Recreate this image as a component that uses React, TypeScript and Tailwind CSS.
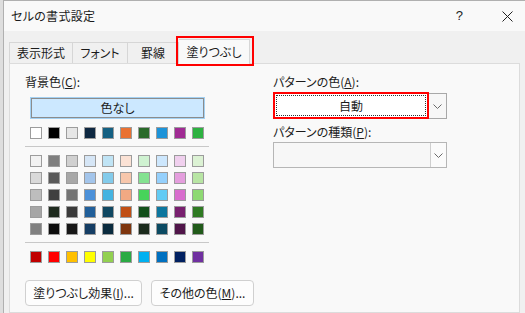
import React from "react";

const row0 = ["#ffffff", "#000000", "#e6e6e6", "#0e2841", "#156082", "#e97132", "#2a6a2a", "#1d93d8", "#a02b93", "#2db140"];
const grid = [
  ["#f2f2f2", "#7f7f7f", "#d0d0d0", "#d6e6f6", "#c0e4f5", "#fbe2d5", "#cff2d1", "#cde7fd", "#f0d0ee", "#dcf2d4"],
  ["#d9d9d9", "#595959", "#a8a8a8", "#a3c5eb", "#83cbeb", "#f7c7ac", "#84e291", "#95d0fc", "#e49edd", "#b8e5a4"],
  ["#bdbdbd", "#404040", "#747474", "#4a90d9", "#44b3e1", "#f1a983", "#47d45a", "#61cbf4", "#d86dcd", "#8ed973"],
  ["#a6a6a6", "#1f2b1f", "#3a3a3a", "#215f9a", "#104862", "#c04f15", "#124f1a", "#0c769e", "#78206e", "#2f7a23"],
  ["#808080", "#0d0d0d", "#171717", "#153d64", "#0a2b3e", "#7e350e", "#1a2a1c", "#0b4a62", "#501549", "#215a1a"],
];
const std = ["#c00000", "#ff0000", "#ffc000", "#ffff00", "#92d050", "#2baa44", "#00b0f0", "#0070c0", "#002060", "#7030a0"];

function Swatch({ c }: { c: string }) {
  return <div className="w-[12px] h-[12px] border border-[#9c9c9c]" style={{ backgroundColor: c }} />;
}

function Row({ colors }: { colors: string[] }) {
  return (
    <div className="flex gap-[6px]">
      {colors.map((c, i) => (
        <Swatch key={i} c={c} />
      ))}
    </div>
  );
}

function Chevron() {
  return (
    <svg width="9" height="5" viewBox="0 0 9 5">
      <path d="M0.5 0.5 L4.5 4.5 L8.5 0.5" fill="none" stroke="#6a6a6a" strokeWidth="1" />
    </svg>
  );
}

export default function App() {
  return (
    <div className="w-[525px] h-[313px] overflow-hidden bg-[#f0f0f0] flex font-['Noto_Sans_CJK_JP','Noto_Sans',sans-serif] [font-feature-settings:'palt'] text-[12px] leading-[16px] text-[#1b1b1b]">
      <div className="w-[3px] bg-[#dedede]" />
      <div className="flex-1 flex flex-col border-l border-t border-[#b0b0b0] min-w-0">
        {/* Title bar */}
        <div className="h-[30px] bg-[#f9f9f9] flex items-center pl-[7px] pr-[12px]">
          <span className="text-[12px] tracking-[0.3px]">セルの書式設定</span>
          <div className="ml-auto flex items-center gap-[39px]">
            <span className="text-[13px] font-['Liberation_Sans',sans-serif] text-[#222]">?</span>
            <svg width="11" height="11" viewBox="0 0 11 11">
              <path d="M0.5 0.5 L10.5 10.5 M10.5 0.5 L0.5 10.5" stroke="#222" strokeWidth="1" />
            </svg>
          </div>
        </div>
        {/* Tab strip */}
        <div className="h-[32px] flex items-end pl-[5px]">
          <div className="w-[64px] h-[21px] border border-b-0 border-[#d6d6d6] flex items-center justify-center">表示形式</div>
          <div className="w-[55px] h-[21px] border border-b-0 border-l-0 border-[#d6d6d6] flex items-center justify-center">フォント</div>
          <div className="w-[51px] h-[21px] border border-b-0 border-l-0 border-[#d6d6d6] flex items-center justify-center">罫線</div>
          <div className="relative w-[71px] h-[25px] mb-[-1px] border border-b-0 border-l-0 border-[#d6d6d6] bg-[#f9f9f9] flex items-center justify-center z-10">
            塗りつぶし
            <span className="absolute left-[-3px] right-[-5px] top-[-4px] bottom-[-2px] border-2 border-[#ff0000]" />
          </div>
        </div>
        {/* Panel */}
        <div className="flex-1 mx-[5px] border border-[#dcdcdc] bg-[#f9f9f9] flex flex-col">
          <div className="flex pt-[10px]">
            <div className="ml-[15px] w-[184px] flex flex-col">
              <div>
                背景色(<span className="underline">C</span>):
              </div>
              <div className="ml-[5px] mt-[7px] w-[175px] h-[22px] border border-[#a3d1f3] bg-[#cce8ff]">
                <div className="h-full border border-[#8c8c8c] flex items-center justify-center">色なし</div>
              </div>
              <div className="ml-[5px] mt-[8px]">
                <Row colors={row0} />
              </div>
              <div className="mt-[7px] h-px bg-[#c8c8c8]" />
              <div className="ml-[5px] mt-[8px] flex flex-col gap-[5px]">
                {grid.map((r, i) => (
                  <Row key={i} colors={r} />
                ))}
              </div>
              <div className="mt-[7px] h-px bg-[#c8c8c8]" />
              <div className="ml-[5px] mt-[8px]">
                <Row colors={std} />
              </div>
            </div>
            <div className="ml-[64px] w-[174px] flex flex-col">
              <div>
                パターンの色(<span className="underline">A</span>):
              </div>
              <div className="mt-[2px] flex items-start">
                <div className="w-[156px] h-[27px] border-2 border-[#ff0000] bg-white p-px">
                  <div className="h-full border border-dotted border-[#333] flex items-center justify-center">自動</div>
                </div>
                <div className="mt-px w-[18px] h-[26px] border border-l-0 border-[#a8a8a8] bg-[#f7f7f7] flex items-center justify-center">
                  <Chevron />
                </div>
              </div>
              <div className="mt-[5px]">
                パターンの種類(<span className="underline">P</span>):
              </div>
              <div className="mt-[2px] w-[174px] h-[26px] border border-[#b6b6b6] bg-[#f7f7f7] flex justify-end">
                <div className="w-[16px] h-full border-l border-[#cfcfcf] bg-[#fbfbfb] flex items-center justify-center">
                  <Chevron />
                </div>
              </div>
            </div>
          </div>
          <div className="ml-[15px] mt-[17px] flex gap-[9px]">
            <div className="w-[117px] h-[26px] rounded-[4px] border border-[#d0d0d0] bg-[#fdfdfd] flex items-center justify-center">
              塗りつぶし効果(<span className="underline">I</span>)...
            </div>
            <div className="w-[103px] h-[26px] rounded-[4px] border border-[#d0d0d0] bg-[#fdfdfd] flex items-center justify-center">
              その他の色(<span className="underline">M</span>)...
            </div>
          </div>
        </div>
      </div>
    </div>
  );
}
